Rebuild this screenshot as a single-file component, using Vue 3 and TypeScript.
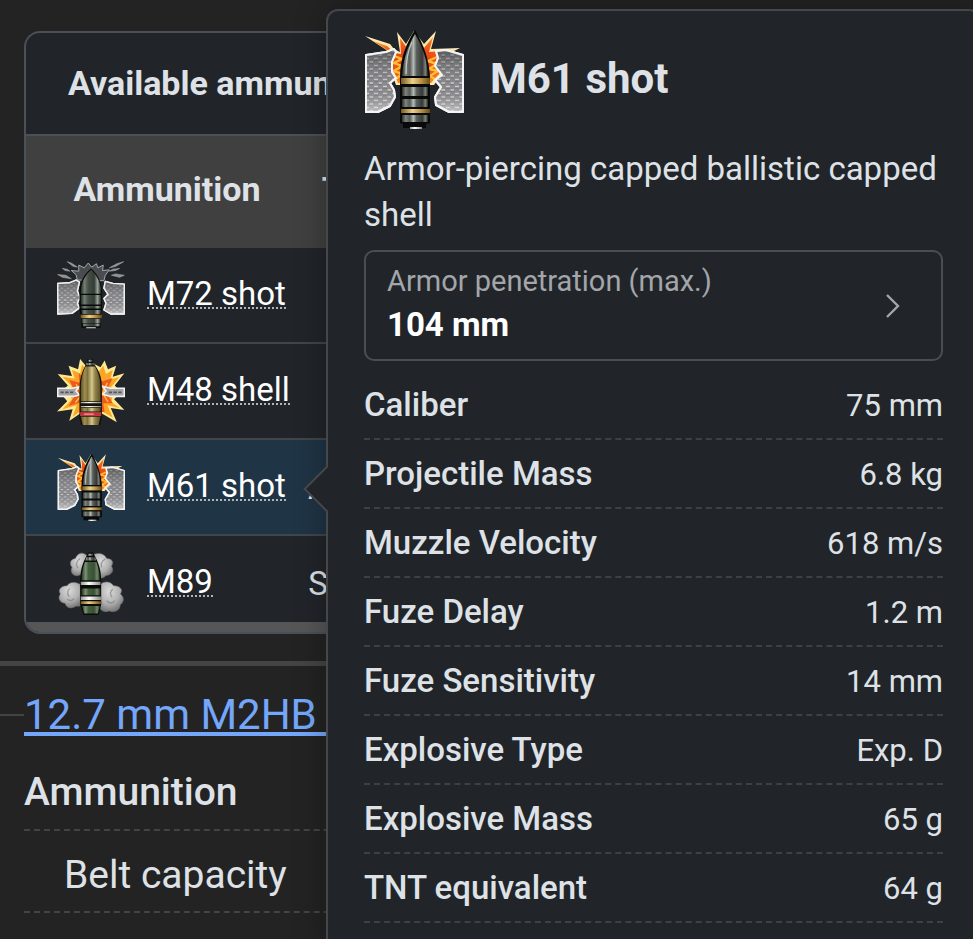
<script setup lang="ts">
type ShellKind = 'ap' | 'he' | 'apcbc' | 'smoke'

interface Round {
  name: string
  kind: ShellKind
  type: string
}

const rounds: Round[] = [
  { name: 'M72 shot', kind: 'ap', type: 'AP' },
  { name: 'M48 shell', kind: 'he', type: 'HE' },
  { name: 'M61 shot', kind: 'apcbc', type: 'APCBC' },
  { name: 'M89', kind: 'smoke', type: 'Smoke' },
]

const selected = 'M61 shot'

const stats: [string, string][] = [
  ['Caliber', '75 mm'],
  ['Projectile Mass', '6.8 kg'],
  ['Muzzle Velocity', '618 m/s'],
  ['Fuze Delay', '1.2 m'],
  ['Fuze Sensitivity', '14 mm'],
  ['Explosive Type', 'Exp. D'],
  ['Explosive Mass', '65 g'],
  ['TNT equivalent', '64 g'],
]
</script>

<template>
  <div class="page">
    <!-- Shared shell artwork -->
    <svg class="defs" aria-hidden="true" width="0" height="0">
      <defs>
        <linearGradient id="steel" x1="0" x2="1" y1="0" y2="0">
          <stop offset="0" stop-color="#2a2d2a" />
          <stop offset=".14" stop-color="#7e837e" />
          <stop offset=".3" stop-color="#555a56" />
          <stop offset=".44" stop-color="#b4bab4" />
          <stop offset=".56" stop-color="#5a5f5b" />
          <stop offset=".78" stop-color="#363a37" />
          <stop offset=".9" stop-color="#7b807c" />
          <stop offset="1" stop-color="#222524" />
        </linearGradient>
        <linearGradient id="dark" x1="0" x2="1" y1="0" y2="0">
          <stop offset="0" stop-color="#242b24" />
          <stop offset=".18" stop-color="#727d73" />
          <stop offset=".36" stop-color="#465047" />
          <stop offset=".66" stop-color="#343d35" />
          <stop offset=".82" stop-color="#98a198" />
          <stop offset="1" stop-color="#1d221d" />
        </linearGradient>
        <linearGradient id="olive" x1="0" x2="1" y1="0" y2="0">
          <stop offset="0" stop-color="#5d5227" />
          <stop offset=".2" stop-color="#a08f50" />
          <stop offset=".34" stop-color="#82733a" />
          <stop offset=".56" stop-color="#d6c98d" />
          <stop offset=".72" stop-color="#94844a" />
          <stop offset="1" stop-color="#5a4f27" />
        </linearGradient>
        <linearGradient id="green" x1="0" x2="1" y1="0" y2="0">
          <stop offset="0" stop-color="#22331f" />
          <stop offset=".22" stop-color="#7d9175" />
          <stop offset=".36" stop-color="#45603f" />
          <stop offset=".66" stop-color="#385035" />
          <stop offset=".82" stop-color="#71866a" />
          <stop offset="1" stop-color="#1c2a1a" />
        </linearGradient>
        <linearGradient id="brass" x1="0" x2="1" y1="0" y2="0">
          <stop offset="0" stop-color="#7b5a20" />
          <stop offset=".4" stop-color="#ecd08a" />
          <stop offset=".7" stop-color="#b98f44" />
          <stop offset="1" stop-color="#6a4d18" />
        </linearGradient>
        <linearGradient id="white" x1="0" x2="1" y1="0" y2="0">
          <stop offset="0" stop-color="#999" />
          <stop offset=".4" stop-color="#fff" />
          <stop offset="1" stop-color="#888" />
        </linearGradient>
        <linearGradient id="shade" x1="0" x2="0" y1="0" y2="1">
          <stop offset="0" stop-color="#222" stop-opacity=".45" />
          <stop offset=".6" stop-color="#777" stop-opacity="0" />
          <stop offset="1" stop-color="#fff" stop-opacity=".5" />
        </linearGradient>
        <radialGradient id="fire">
          <stop offset="0" stop-color="#d8310c" />
          <stop offset=".6" stop-color="#ee5518" />
          <stop offset=".85" stop-color="#f06a1c" />
          <stop offset="1" stop-color="#f58a2a" />
        </radialGradient>
        <radialGradient id="puff" cx=".42" cy=".32" r=".7">
          <stop offset="0" stop-color="#dcdcdc" />
          <stop offset=".6" stop-color="#b0b0b0" />
          <stop offset="1" stop-color="#757575" />
        </radialGradient>
        <pattern id="plate" width="9" height="7" patternUnits="userSpaceOnUse">
          <rect width="9" height="7" fill="#8b8b8f" />
          <path d="M1 1.5h4M5.500 5h3.500" stroke="#cfcfd2" stroke-width="1.6" />
          <path d="M1 3.200h4M5.500 6.600h3.500" stroke="#717175" stroke-width=".8" />
        </pattern>

        <symbol id="shell-apcbc" viewBox="0 0 100 100">
          <path d="M1 7 26 15 30 20 36 23 33 3 42 15 50 2 60 15 72 2 67 20 96 19 82 26 78 45 70 56H32L27 42 27 24Z" fill="#ffe9ae" />
          <path d="M9 12 23 17 31 24 37 25 36 9 43 19 50 8 60 19 69 8 65 23 89 21 77 28 76 44 67 54H34L29 40 29 25Z" fill="url(#fire)" />
          <path d="M30 27l8 3-8 4 8 3-8 5 8 3-6 5M73 28l-9 4 9 3-8 5 9 2-8 5 6 4" fill="none" stroke="#ffbf35" stroke-width="2.400" />
          <g stroke="#f4f4f4" stroke-width="2" stroke-linejoin="round">
            <g fill="url(#plate)">
              <path d="M2 26 22 23 30 20 32 23 28 33 28 43 32 49 26 54 30 61 31 68 26 77 14 83H2Z" />
              <path d="M72 22 82 21 99 26V83H85L72 76 71 68 77 58 71 51 78 46 71 37 74 29Z" />
            </g>
            <g fill="url(#shade)">
              <path d="M2 26 22 23 30 20 32 23 28 33 28 43 32 49 26 54 30 61 31 68 26 77 14 83H2Z" />
              <path d="M72 22 82 21 99 26V83H85L72 76 71 68 77 58 71 51 78 46 71 37 74 29Z" />
            </g>
          </g>
          <path d="M51 1C42 14 36 31 36 48V94L39 95V99H62V95L66 94V48C65 31 60 16 51 1Z" fill="#080909" />
          <path d="M51 5C43 18 39 32 38 47H64C63 31 59 18 51 5Z" fill="url(#steel)" />
          <path d="M48 13C43 23 42 35 42 45" fill="none" stroke="#c3c8c3" stroke-width="1.300" />
          <path d="M37 49H66V55H37Z" fill="url(#brass)" />
          <path d="M38 58H64V67H38ZM38 70H64V78H38ZM38 86H64V93H38Z" fill="url(#steel)" />
          <path d="M37 80H66V84H37Z" fill="url(#brass)" />
          <path d="M46 98H58V100H46Z" fill="url(#white)" />
        </symbol>

        <symbol id="shell-ap" viewBox="0 0 100 100">
          <path d="M30 28 28 20 21 14 32 15 32 6 40 10 46 3 51 9 58 4 60 10 68 6 67 14 77 13 71 21 69 29Z" fill="#4a4d50" stroke="#b2b4b6" stroke-width="1.300" />
          <path d="M15 1 21 3 30 9 24 8ZM8 11 15 12 19 15 12 14ZM1 20 13 21 21 26 8 24ZM98 1 88 4 77 10 86 8ZM99 21 86 19 80 21 92 24ZM92 11 82 12 77 15 86 14Z" fill="#8f9194" stroke="#aeb0b2" stroke-width=".8" />
          <g stroke="#eee" stroke-width="2" stroke-linejoin="round">
            <g fill="url(#plate)">
              <path d="M1 33 18 32 28 28 33 31 30 44 34 54 30 62 33 69 22 77 1 78Z" />
              <path d="M71 30 82 33 99 34V78H79L69 72 72 62 69 55 75 49 69 40Z" />
            </g>
            <g fill="url(#shade)">
              <path d="M1 33 18 32 28 28 33 31 30 44 34 54 30 62 33 69 22 77 1 78Z" />
              <path d="M71 30 82 33 99 34V78H79L69 72 72 62 69 55 75 49 69 40Z" />
            </g>
          </g>
          <path d="M50 11C41 18 34 30 33 42V72L36 84V98H64V84L66 72V42C65 30 59 18 50 11Z" fill="#080908" />
          <path d="M50 13C42 20 36 31 35 43V48H65V43C64 31 58 20 50 13ZM35 50H65V64H35ZM35 66H65V70H35ZM36 72H65L64 78H37ZM37 85H64V91H37ZM38 92H63V96H38Z" fill="url(#dark)" />
          <path d="M35 79H66V84H35Z" fill="url(#brass)" />
          <path d="M43 97H57V99H43Z" fill="#aaa" />
        </symbol>

        <symbol id="shell-he" viewBox="0 0 100 100">
          <path d="M1 25 22 28 17 13 31 18 34 3 44 15 52 9 64 15 70 5 75 18 87 13 82 29 99 24 85 42 94 52 84 62 99 78 79 75 88 96 66 83H34L18 94 23 77 0 80 15 65 4 52 16 42Z" fill="#ffe98f" />
          <path d="M8 29 26 32 22 19 34 24 37 11 45 22H61L68 13 72 25 82 19 78 34 92 29 79 45 82 56 80 66 92 75 74 71 82 89 63 78H37L23 88 29 71 8 77 22 62 16 52 22 43Z" fill="#fba426" />
          <path d="M18 34 33 38 32 24 45 35 60 25 66 36 82 31 72 52 82 68 68 68 70 81H34L34 67 17 72 28 54Z" fill="#ec5a1d" />
          <path d="M28 40l9 15-10 12M74 38l-7 15 8 13" fill="none" stroke="#ffc33b" stroke-width="2" />
          <path d="M1 46H22L32 44 28 50 33 56 24 58H1ZM99 46H79L67 43 72 50 67 55 79 58H99Z" fill="#a5a5a5" stroke="#f2f2f2" stroke-width="2.400" />
          <path d="M5 52h19M76 52h19" stroke="#55585a" stroke-width="2.400" stroke-dasharray="5 2" />
          <path d="M45 3H53V7L57 14C64 24 66 34 66 46V90L63 102H36L33 90V46C33 34 36 24 41 14L45 7Z" fill="#131307" />
          <path d="M46 4H52V7H46ZM43 9H55L56 12H42Z" fill="url(#steel)" />
          <path d="M42 14H56C62 25 64 35 64 46V65H35V46C35 34 37 24 42 14ZM35 75H64V80H35ZM35 88H64L61 100H38Z" fill="url(#olive)" />
          <path d="M35 66H65V68H35ZM35 72H65V74H35Z" fill="url(#white)" />
          <path d="M34 81H65V87H34Z" fill="#c03540" />
          <path d="M40 83H54V85H40Z" fill="#e0a0a0" />
        </symbol>

        <symbol id="shell-smoke" viewBox="0 0 100 100">
          <g fill="url(#puff)" stroke="#77797a" stroke-width=".7">
            <path d="M42 8C34 3 29 9 27 14 19 15 18 22 22 27 18 36 26 42 34 38 42 44 49 37 48 29V13Z" />
            <path d="M54 8C62 5 70 7 73 14 80 14 85 19 80 25 86 34 77 39 72 39 66 46 56 43 53 35Z" />
            <path d="M34 52C26 47 17 49 15 54 5 54 1 61 5 66 0 73 5 79 12 80 14 88 23 88 28 84 38 86 39 78 37 70Z" />
            <path d="M64 52C70 46 80 48 83 54 93 54 98 60 93 66 101 72 97 80 93 82 93 91 83 94 77 91 67 95 61 88 62 79Z" />
          </g>
          <path d="M34 14c-6 4-7 10-3 14M71 15c-6 3-7 8-5 12M19 58c-5 4-4 8-1 12M82 59c-5 4-4 8-1 12M73 76c5 5 9 4 12 0M15 74c4 3 8 2 10-1" fill="none" stroke="#777" stroke-opacity=".6" stroke-width="2" />
          <path d="M46 5H53L57 13C63 25 65 35 65 48V82L61 97H39L34 82V48C34 34 37 22 42 13Z" fill="#090c08" />
          <path d="M46 7H53V10H45ZM43 12H56L58 17H41Z" fill="url(#steel)" />
          <path d="M41 19H58C61 27 63 36 63 46H36C36 36 38 26 41 19ZM36 58H64V68H36ZM37 84H63L60 95H40Z" fill="url(#green)" />
          <path d="M35 48H64V53H35ZM35 70H65V75H35Z" fill="url(#white)" />
          <path d="M35 77H65V81H35Z" fill="url(#brass)" />
        </symbol>
      </defs>
    </svg>

    <main class="sheet">
      <section class="card">
        <h2 class="card-title">Available ammunition</h2>
        <div class="card-scroll">
          <table class="ammo">
            <thead>
              <tr>
                <th class="col-name" scope="col">Ammunition</th>
                <th class="col-type" scope="col">Type</th>
                <th aria-hidden="true"></th>
              </tr>
            </thead>
            <tbody>
              <tr v-for="r in rounds" :key="r.name" :class="{ active: r.name === selected }">
                <td>
                  <div class="round">
                    <svg class="round-icon" aria-hidden="true"><use :href="`#shell-${r.kind}`" /></svg>
                    <span class="round-name">{{ r.name }}</span>
                  </div>
                </td>
                <td class="col-type">{{ r.type }}</td>
                <td></td>
              </tr>
            </tbody>
          </table>
        </div>
        <div class="scrollbar"></div>
      </section>

      <section class="weapon">
        <h2 class="weapon-head"><a href="#m2hb">12.7 mm M2HB machine gun</a></h2>
        <div class="weapon-row strong">Ammunition</div>
        <div class="weapon-row sub">Belt capacity</div>
      </section>
    </main>

    <aside class="popup">
      <header class="popup-head">
        <svg class="popup-icon" aria-hidden="true"><use href="#shell-apcbc" /></svg>
        <h1>M61 shot</h1>
      </header>
      <p class="desc">Armor-piercing capped ballistic capped shell</p>
      <button class="pen" type="button">
        <span class="pen-text">
          <span class="pen-label">Armor penetration (max.)</span>
          <strong class="pen-value">104 mm</strong>
        </span>
        <svg class="chevron" viewBox="0 0 16 28" aria-hidden="true">
          <path d="M2 3 13 14 2 25" fill="none" stroke="currentColor" stroke-width="2.4" />
        </svg>
      </button>
      <dl class="stats">
        <div v-for="[label, value] in stats" :key="label" class="stat">
          <dt>{{ label }}</dt>
          <dd>{{ value }}</dd>
        </div>
      </dl>
    </aside>
  </div>
</template>

<style>
body {
  margin: 0;
  background: #232323;
}
</style>

<style scoped>
.page {
  position: relative;
  box-sizing: border-box;
  height: 100vh;
  overflow: hidden;
  background: #232323;
  color: #dee2e6;
  font-family: Roboto, sans-serif;
  font-size: 33px;
}

.defs {
  position: absolute;
}

h1,
h2,
p,
dl,
dd {
  margin: 0;
}

.sheet {
  padding-top: 31px;
}

.card {
  margin: 0 24px;
  border: 2px solid #495057;
  border-radius: 16px;
  background: #212529;
  overflow: hidden;
}

.card-title {
  padding: 0 42px;
  border-bottom: 2px solid #495057;
  font-size: 34px;
  font-weight: 700;
  line-height: 101px;
}

.card-scroll {
  max-height: 486px;
  overflow: hidden;
}

.ammo {
  width: 100%;
  table-layout: fixed;
  border-collapse: separate;
  border-spacing: 0;
}

.ammo th {
  box-sizing: border-box;
  height: 112px;
  padding: 0 0 6px;
  background: #404040;
  font-size: 34px;
  font-weight: 700;
}

.ammo .col-name {
  width: 282px;
}

.ammo .col-type {
  width: 102px;
  text-align: center;
}

.ammo td {
  box-sizing: border-box;
  height: 96px;
  padding: 0;
  border-bottom: 2px solid #424649;
}

.ammo .active td {
  background: #1f3445;
}

.round {
  display: flex;
  align-items: center;
  gap: 22px;
  padding-left: 31px;
}

.round-icon {
  width: 68px;
  height: 68px;
}

.round-name {
  border-bottom: 2px dotted #adb5bd;
  color: #fff;
  line-height: 26px;
}

.scrollbar {
  height: 10px;
  background: #555657;
}

.weapon {
  margin-top: 27px;
  border-top: 5px solid #444;
}

.weapon-head {
  display: flex;
  align-items: center;
  height: 97px;
  font-size: 42px;
  font-weight: 400;
  white-space: nowrap;
}

.weapon-head::before {
  content: '';
  width: 24px;
  height: 2px;
  background: #444;
}

.weapon-head a {
  color: #74a7fb;
  text-decoration-thickness: 4px;
  text-underline-offset: 3px;
}

.weapon-row {
  margin: 0 24px;
  border-bottom: 2px dashed #444;
  font-size: 39px;
}

.weapon-row.strong {
  padding-bottom: 8px;
  font-weight: 500;
  line-height: 58px;
}

.weapon-row.sub {
  padding: 8px 0 0 40px;
  line-height: 72px;
}

.popup {
  position: absolute;
  top: 9px;
  right: -8px;
  bottom: -20px;
  left: 326px;
  box-sizing: border-box;
  padding: 18px 36px;
  border: 2px solid #45484b;
  border-radius: 12px;
  background: #212529;
  box-shadow: 0 0 32px rgba(0, 0, 0, 0.3);
}

.popup::before {
  content: '';
  position: absolute;
  top: 462px;
  left: -18px;
  width: 30px;
  height: 30px;
  border-bottom: 2px solid #45484b;
  border-left: 2px solid #45484b;
  background: #212529;
  transform: rotate(45deg);
}

.popup-head {
  display: flex;
  align-items: center;
  gap: 26px;
}

.popup-icon {
  width: 100px;
  height: 100px;
}

.popup-head h1 {
  font-size: 42px;
  font-weight: 700;
  line-height: 46px;
}

.desc {
  padding: 17px 0 12px;
  line-height: 46px;
}

.pen {
  display: flex;
  align-items: center;
  justify-content: space-between;
  box-sizing: border-box;
  width: 100%;
  height: 111px;
  padding: 0 40px 0 21px;
  border: 2px solid #4a4e52;
  border-radius: 10px;
  background: transparent;
  color: #a3a6aa;
  font: inherit;
  text-align: left;
}

.pen-text {
  display: flex;
  flex-direction: column;
  padding-bottom: 6px;
  line-height: 44px;
}

.pen-label {
  font-size: 29px;
}

.pen-value {
  color: #fff;
  font-size: 33px;
}

.chevron {
  width: 16px;
  height: 28px;
}

.stats {
  padding-top: 10px;
}

.stat {
  display: flex;
  align-items: baseline;
  justify-content: space-between;
  padding-top: 2px;
  border-bottom: 2px dashed #3d4145;
  line-height: 64px;
}

.stat dt {
  font-weight: 500;
}

.stat dd {
  font-size: 31px;
}
</style>
